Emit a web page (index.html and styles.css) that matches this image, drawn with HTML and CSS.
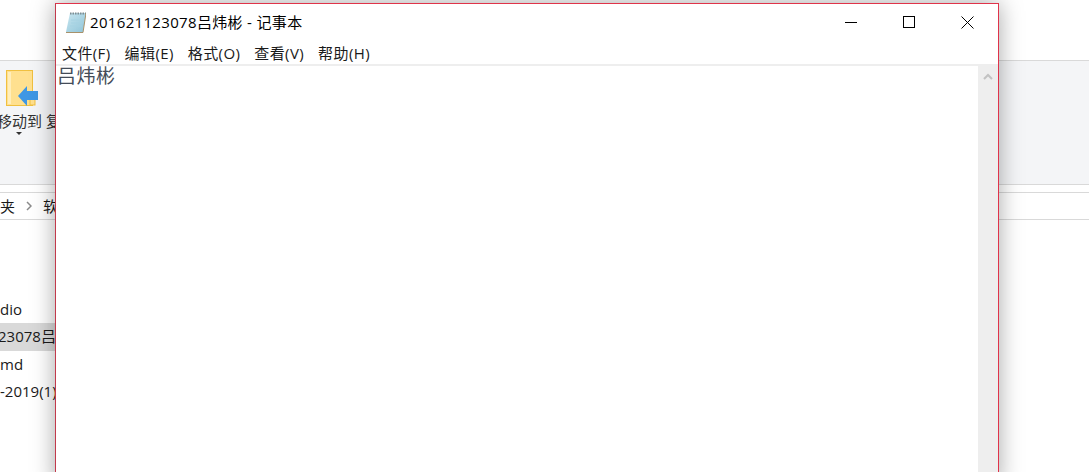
FILE: index.html
```html
<!DOCTYPE html>
<html lang="zh-CN">
<head>
    <meta charset="UTF-8">
    <meta name="viewport" content="width=device-width, initial-scale=1.0">
    <title>记事本</title>
    <link rel="stylesheet" href="styles.css">
</head>
<body>
    <!-- Explorer window behind -->
    <div class="explorer">
        <div class="ribbon">
            <div class="ribbon-btn">
                <svg class="move-icon" viewBox="0 0 33 36" xmlns="http://www.w3.org/2000/svg">
                    <rect x="0.5" y="0.5" width="26" height="35" fill="#ffe08f" stroke="#f0c040"/>
                    <rect x="2" y="2" width="3" height="32" fill="#ffeebb"/>
                    <rect x="24" y="24" width="5" height="11" fill="#ffe08f" stroke="#f0c040"/>
                    <path d="M12 27 L21 17 V22 H32 V31 H21 V37 Z" fill="#3f97e4" transform="translate(0 -1)"/>
                </svg>
                <div class="ribbon-label">移动到 复</div>
                <div class="ribbon-arrow"></div>
            </div>
        </div>
        <div class="address">
            <span>夹</span>
            <svg class="crumb" viewBox="0 0 6 10" xmlns="http://www.w3.org/2000/svg">
                <path d="M1 1 L5 5 L1 9" fill="none" stroke="#8a8a8a" stroke-width="1.5"/>
            </svg>
            <span>软</span>
        </div>
        <div class="files">
            <div class="file-row">dio</div>
            <div class="file-row selected">23078吕</div>
            <div class="file-row">md</div>
            <div class="file-row">-2019(1)</div>
        </div>
    </div>

    <!-- Notepad window -->
    <div class="notepad">
        <div class="titlebar">
            <svg class="app-icon" viewBox="0 0 20 21" xmlns="http://www.w3.org/2000/svg">
                <defs>
                    <linearGradient id="page" x1="0" y1="0" x2="1" y2="1">
                        <stop offset="0" stop-color="#c8e6f0"/>
                        <stop offset="1" stop-color="#8fc4d8"/>
                    </linearGradient>
                </defs>
                <path d="M4 1 H20 L17 20 H0 Z" fill="url(#page)"/>
                <path d="M5 8 H17 M5 11 H16 M4 14 H16" stroke="#a5d2e2" stroke-width="1"/>
                <path d="M4 1.5 H20" stroke="#7d8c92" stroke-width="2" stroke-dasharray="1.5 1"/>
                <path d="M0 20.5 H17 L20 1" fill="none" stroke="#a8916a" stroke-width="1"/>
            </svg>
            <span class="title">201621123078吕炜彬 - 记事本</span>
            <div class="win-btns">
                <div class="win-btn">
                    <svg viewBox="0 0 13 13" xmlns="http://www.w3.org/2000/svg"><path d="M0 6.5 H12" stroke="#000" stroke-width="1"/></svg>
                </div>
                <div class="win-btn">
                    <svg viewBox="0 0 13 13" xmlns="http://www.w3.org/2000/svg"><rect x="0.5" y="0.5" width="11" height="11" fill="none" stroke="#000"/></svg>
                </div>
                <div class="win-btn">
                    <svg viewBox="0 0 13 13" xmlns="http://www.w3.org/2000/svg"><path d="M0.5 0.5 L12.5 12.5 M12.5 0.5 L0.5 12.5" stroke="#000" stroke-width="1"/></svg>
                </div>
            </div>
        </div>
        <div class="menubar">
            <span class="menu-item">文件(F)</span>
            <span class="menu-item">编辑(E)</span>
            <span class="menu-item">格式(O)</span>
            <span class="menu-item">查看(V)</span>
            <span class="menu-item">帮助(H)</span>
        </div>
        <div class="edit-area">
            <div class="edit-text">吕炜彬</div>
            <div class="scrollbar">
                <svg class="scroll-up" viewBox="0 0 10 7" xmlns="http://www.w3.org/2000/svg">
                    <path d="M1 6 L5 2 L9 6" fill="none" stroke="#c2c2c2" stroke-width="2"/>
                </svg>
            </div>
        </div>
    </div>
</body>
</html>
```

FILE: styles.css
```css
html, body {
    height: 100%;
}

body {
    margin: 0;
    overflow: hidden;
    background-color: white;
    font-family: "Open Sans", "Noto Sans CJK SC", sans-serif;
    font-size: 15px;
    color: #1a1a1a;
    position: relative;
}

.explorer {
    padding-top: 60px;
    height: 412px;
}

.ribbon {
    height: 123px;
    background-color: #f4f5f7;
    border-top: 1px solid #d9d9d9;
    border-bottom: 1px solid #d9d9d9;
}

.ribbon-btn {
    width: 70px;
    display: flex;
    flex-direction: column;
    padding-top: 9px;
}

.move-icon {
    width: 33px;
    height: 36px;
    margin-left: 6px;
}

.ribbon-label {
    font-size: 15px;
    line-height: 20px;
    margin-top: 5px;
    margin-left: -3px;
    white-space: nowrap;
    color: #333;
}

.ribbon-arrow {
    width: 0;
    height: 0;
    margin: 1px 0 0 16px;
    border-left: 3px solid transparent;
    border-right: 3px solid transparent;
    border-top: 3px solid #333;
}

.address {
    margin-top: 7px;
    height: 26px;
    border-top: 1px solid #d9d9d9;
    border-bottom: 1px solid #d9d9d9;
    display: flex;
    align-items: center;
    gap: 11px;
    font-size: 15px;
    line-height: 24px;
}

.crumb {
    width: 6px;
    height: 10px;
}

.files {
    margin-top: 76px;
    width: 55px;
    overflow: hidden;
}

.file-row {
    height: 27px;
    line-height: 27px;
    white-space: nowrap;
    font-size: 15px;
}

.file-row.selected {
    height: 28px;
    text-indent: -2px;
    background-color: #d9d9d9;
}

.notepad {
    position: absolute;
    left: 55px;
    top: 3px;
    width: 942px;
    height: 480px;
    background-color: white;
    border: 1px solid #e0334a;
    border-left-color: #c23a4c;
    box-shadow: 0 0 22px rgba(0, 0, 0, 0.35);
    display: flex;
    flex-direction: column;
}

.titlebar {
    height: 36px;
    display: flex;
    align-items: center;
    flex-shrink: 0;
}

.app-icon {
    width: 20px;
    height: 21px;
    margin-left: 10px;
}

.title {
    margin-left: 4px;
    margin-bottom: 2px;
    font-size: 15px;
    letter-spacing: 0.33px;
    color: #000;
}

.win-btns {
    margin-left: auto;
    padding-right: 2px;
    display: flex;
}

.win-btn {
    width: 58px;
    height: 36px;
    display: flex;
    align-items: center;
    justify-content: center;
}

.win-btn svg {
    width: 13px;
    height: 13px;
}

.menubar {
    height: 24px;
    display: flex;
    gap: 14px;
    padding-left: 6px;
    align-items: center;
    font-size: 15px;
    letter-spacing: 0.4px;
    color: #1a1a1a;
    flex-shrink: 0;
    border-bottom: 2px solid #eeeeee;
}

.edit-area {
    flex: 1;
    display: flex;
}

.edit-text {
    flex: 1;
    padding-left: 1px;
    font-family: "Liberation Serif", "Noto Sans CJK SC", serif;
    font-size: 19px;
    line-height: 22px;
    letter-spacing: 0.5px;
    color: #444c58;
}

.scrollbar {
    width: 20px;
    background-color: #eeeeee;
    display: flex;
    justify-content: center;
    align-items: flex-start;
}

.scroll-up {
    width: 10px;
    height: 7px;
    margin-top: 7px;
}
```
